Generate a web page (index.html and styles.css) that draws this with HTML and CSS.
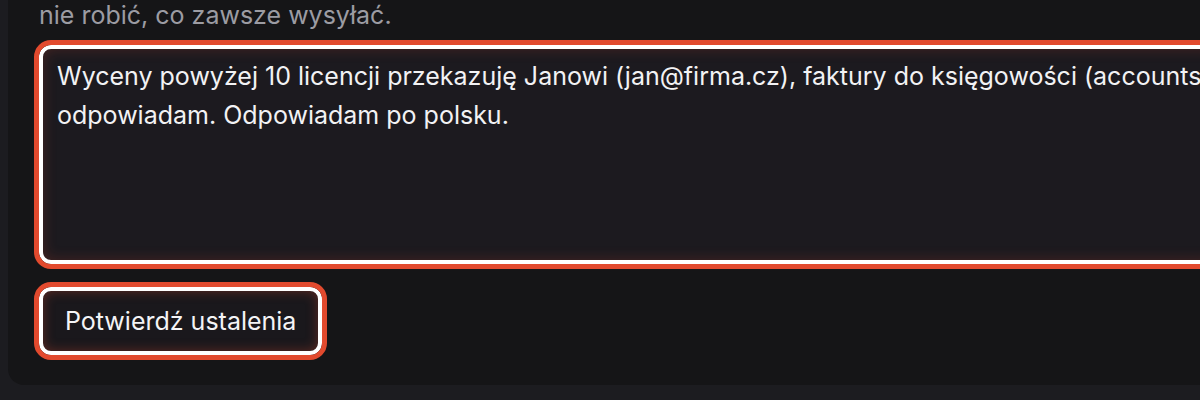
FILE: index.html
```html
<!DOCTYPE html>
<html lang="pl">
<head>
<meta charset="utf-8">
<link rel="stylesheet" href="styles.css">
</head>
<body>
<div class="card">
  <p class="hint">nie robić, co zawsze wysyłać.</p>
  <div class="field">Wyceny powyżej 10 licencji przekazuję Janowi (jan@firma.cz), faktury do księgowości (accounts@firma.cz), na reklamacje zawsze<br>odpowiadam. Odpowiadam po polsku.</div>
  <button class="btn" type="button">Potwierdź ustalenia</button>
</div>
</body>
</html>
```
FILE: styles.css
```css
html, body {
  margin: 0;
  padding: 0;
  background: #1c1c20;
  overflow: hidden;
  width: 1200px;
  height: 400px;
}
.card {
  box-sizing: border-box;
  margin: -20px 0 0 8px;
  width: 2000px;
  background: #151517;
  border-radius: 16px;
  padding: 17px 31px 30px 31px;
  font-family: Inter, "Noto Sans", sans-serif;
  display: flex;
  flex-direction: column;
  align-items: flex-start;
}
.hint {
  margin: 0;
  color: #9c9ca3;
  font-size: 25px;
  line-height: 36px;
}
.field {
  box-sizing: border-box;
  margin-top: 12px;
  width: 1930px;
  height: 219px;
  border: 4px solid #ffffff;
  outline: 5px solid #e24a2e;
  border-radius: 12px;
  background: #1c1a1f;
  box-shadow: inset 0 0 14px rgba(226, 74, 46, 0.22);
  padding: 8px 14px;
  color: #f2f2f4;
  font-size: 25px;
  line-height: 39px;
  white-space: nowrap;
}
.btn {
  box-sizing: border-box;
  margin-top: 23px;
  height: 68px;
  border: 4px solid #ffffff;
  outline: 5px solid #e24a2e;
  border-radius: 12px;
  background: #1a181c;
  box-shadow: inset 0 0 12px rgba(226, 74, 46, 0.35);
  padding: 0 22px;
  color: #f4f4f6;
  font-family: Inter, "Noto Sans", sans-serif;
  font-size: 25px;
  line-height: 32px;
}
```
